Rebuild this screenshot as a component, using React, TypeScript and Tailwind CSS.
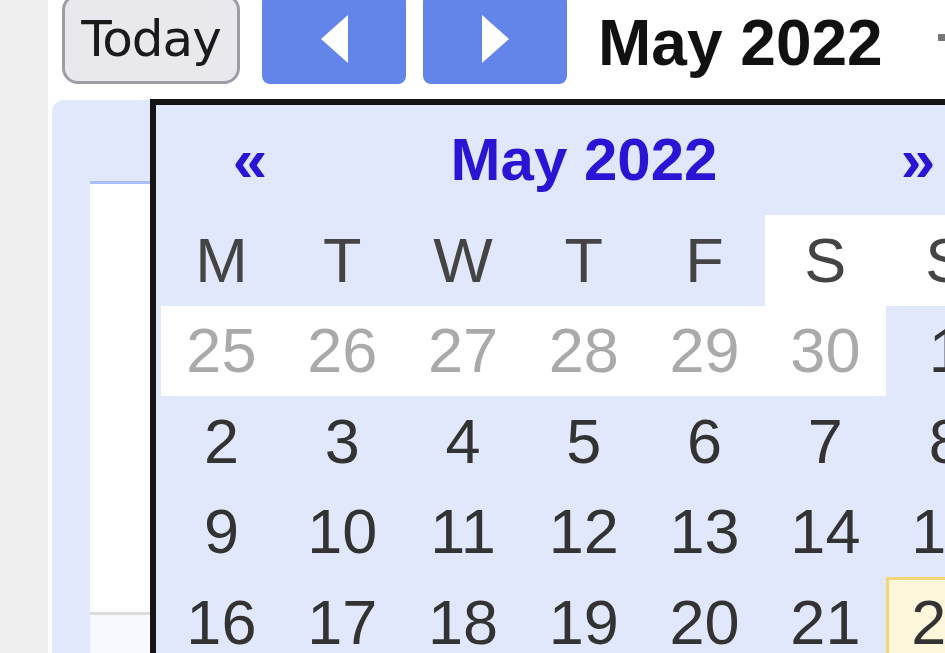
const weekdays = ["M", "T", "W", "T", "F", "S", "S"];

type Cell = { day: number; other?: boolean; today?: boolean };

const weeks: Cell[][] = [
  [
    { day: 25, other: true },
    { day: 26, other: true },
    { day: 27, other: true },
    { day: 28, other: true },
    { day: 29, other: true },
    { day: 30, other: true },
    { day: 1 },
  ],
  [2, 3, 4, 5, 6, 7, 8].map((d) => ({ day: d })),
  [9, 10, 11, 12, 13, 14, 15].map((d) => ({ day: d })),
  [16, 17, 18, 19, 20, 21, 22].map((d) => ({ day: d, today: d === 22 })),
];

function Triangle({ dir }: { dir: "left" | "right" }) {
  return (
    <svg width="27" height="48" viewBox="0 0 27 48">
      <polygon
        points={dir === "left" ? "27,0 27,48 0,24" : "0,0 0,48 27,24"}
        fill="#ffffff"
      />
    </svg>
  );
}

function DatePopup() {
  return (
    <div className="absolute left-[150px] top-[99px] h-[620px] w-[900px] border-[6px] border-[#151515] bg-[#e2e8fc] pl-[5px]">
      <div className="flex h-[110px] w-[846px] items-center font-bold text-[#2b14d4]">
        <div className="w-[178px] text-center text-[62px] leading-none">«</div>
        <div className="flex-1 text-center text-[60px] leading-none">May 2022</div>
        <div className="w-[178px] text-center text-[62px] leading-none">»</div>
      </div>
      <div className="grid grid-cols-[repeat(7,120.8px)] auto-rows-[90.5px] text-[63px] leading-none">
        {weekdays.map((w, i) => (
          <div
            key={i}
            className={
              "flex items-center justify-center text-[#444] " +
              (i >= 5 ? "bg-white" : "")
            }
          >
            {w}
          </div>
        ))}
        {weeks.flat().map((c, i) => (
          <div
            key={i}
            className={
              "flex items-center justify-center " +
              (c.other
                ? "bg-white text-[#aaaaaa]"
                : c.today
                  ? "border-[3px] border-[#f6d57a] bg-[#fff7dc] text-[#333]"
                  : "text-[#333]")
            }
          >
            {c.day}
          </div>
        ))}
      </div>
    </div>
  );
}

export default function App() {
  return (
    <div className="relative flex h-[653px] w-[945px] overflow-hidden bg-white font-['Liberation_Sans',Arial,sans-serif]">
      <aside className="w-[48px] shrink-0 bg-[#efefef]" />
      <main className="flex min-w-0 flex-1 flex-col pl-[4px]">
        <div className="flex h-[100px] shrink-0 items-start">
          <div className="-mt-[6px] flex h-[90px] items-center">
            <button className="ml-[10px] flex h-[90px] w-[178px] items-center justify-center rounded-[16px] border-[3px] border-[#9d9da6] bg-[#e9e9ed] font-['DejaVu_Sans',sans-serif] text-[50px] leading-none tracking-[-1px] text-[#1a1a1a]">
              Today
            </button>
            <button className="ml-[22px] flex h-[90px] w-[144px] items-center justify-center rounded-[8px] bg-[#6385ea]">
              <Triangle dir="left" />
            </button>
            <button className="ml-[17px] flex h-[90px] w-[144px] items-center justify-center rounded-[8px] bg-[#6385ea]">
              <Triangle dir="right" />
            </button>
            <h1 className="mt-[7px] ml-[31px] whitespace-nowrap text-[64px] font-bold leading-none text-[#111]">
              May 2022
            </h1>
            <span className="mt-[-4px] ml-[55px] h-[7px] w-[20px] shrink-0 bg-[#777]" />
          </div>
        </div>
        <div className="flex-1 rounded-tl-[12px] bg-[#e2e8fc] pl-[38px] pt-[81px]">
          <div className="h-[434px] border-b-[3px] border-t-[3px] border-b-[#dcdcdc] border-t-[#a9bff6] bg-white" />
          <div className="h-[60px] bg-[#f8f9ff]" />
        </div>
      </main>
      <DatePopup />
    </div>
  );
}
